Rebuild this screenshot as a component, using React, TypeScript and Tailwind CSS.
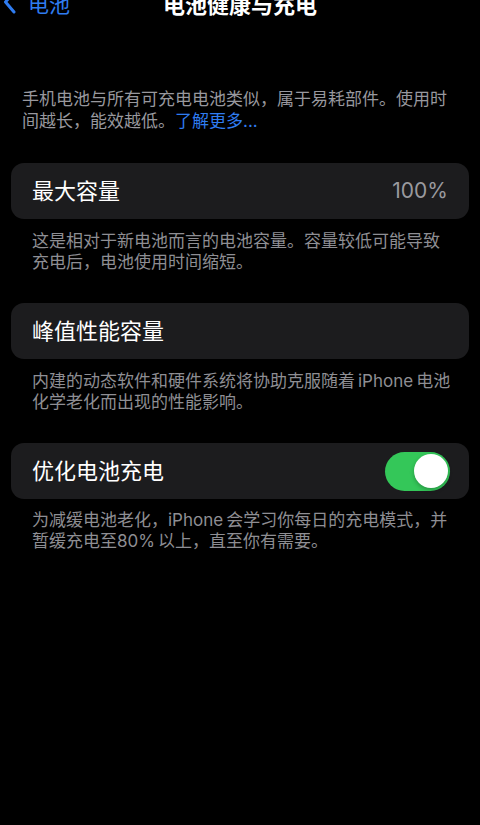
import { useState } from "react";

const font = { fontFamily: "Inter, 'Noto Sans CJK SC', sans-serif" };

function Card({ children }: { children: React.ReactNode }) {
  return (
    <div className="mx-[11px] flex h-[56px] items-center justify-between rounded-[13px] bg-[#1c1c1e] px-[21px]">
      {children}
    </div>
  );
}

function Note({ children, className = "" }: { children: React.ReactNode; className?: string }) {
  return (
    <p className={`whitespace-nowrap px-[32px] text-[17px] leading-[21px] text-[#8e8e93] ${className}`}>
      {children}
    </p>
  );
}

export default function App() {
  const [optimized, setOptimized] = useState(true);

  return (
    <div className="h-[825px] w-[480px] overflow-hidden bg-black" style={font}>
      <div className="-mt-[6px] grid h-[22px] grid-cols-[1fr_auto_1fr] items-center">
        <div className="flex items-center gap-[12px] pl-[3px]">
          <svg width="13" height="24" viewBox="0 0 13 24" className="-mt-[6px]">
            <path d="M11 2 L2.5 12 L11 22" fill="none" stroke="#2f7cf0" strokeWidth="3" strokeLinecap="round" strokeLinejoin="round" />
          </svg>
          <span className="text-[21px] leading-[22px] text-[#2f7cf0]">电池</span>
        </div>
        <h1 className="text-[22px] font-semibold leading-[22px] text-white">电池健康与充电</h1>
        <div />
      </div>

      <p className="mt-[72px] px-[22px] text-[17px] leading-[22px] text-[#98989e]">
        手机电池与所有可充电电池类似，属于易耗部件。使用时间越长，能效越低。
        <span className="text-[#2f7cf0]">了解更多...</span>
      </p>

      <div className="mt-[31px]">
        <Card>
          <span className="text-[22px] text-white">最大容量</span>
          <span className="text-[21px] text-[#9a9a9f]">100%</span>
        </Card>
      </div>
      <Note className="mt-[12px]">
        这是相对于新电池而言的电池容量。容量较低可能导致
        <br />
        充电后，电池使用时间缩短。
      </Note>

      <div className="mt-[30px]">
        <Card>
          <span className="text-[22px] text-white">峰值性能容量</span>
        </Card>
      </div>
      <Note className="mt-[12px]">
        内建的动态软件和硬件系统将协助克服随着<span className="mx-[3px]">iPhone</span>电池
        <br />
        化学老化而出现的性能影响。
      </Note>

      <div className="mt-[30px]">
        <Card>
          <span className="text-[22px] text-white">优化电池充电</span>
          <button
            onClick={() => setOptimized(!optimized)}
            className={`-mr-[2px] flex h-[39px] w-[65px] items-center rounded-full p-[2.5px] ${
              optimized ? "justify-end bg-[#34c759]" : "justify-start bg-[#39393d]"
            }`}
          >
            <span className="h-[34px] w-[34px] rounded-full bg-white shadow-[0_2px_4px_rgba(0,0,0,0.25)]" />
          </button>
        </Card>
      </div>
      <Note className="mt-[11px]">
        为减缓电池老化，iPhone<span className="ml-[3px]">会学习你每日的充电模式，并</span>
        <br />
        暂缓充电至80%<span className="ml-[3px]">以上，直至你有需要。</span>
      </Note>
    </div>
  );
}
